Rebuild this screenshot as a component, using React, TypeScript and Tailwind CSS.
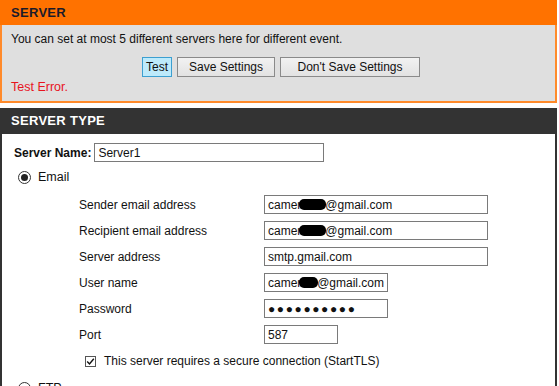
import React from "react";

function Redacted() {
  return <span className="inline-block w-[27px] h-[11px] bg-black rounded-[5px] align-[-1px] -ml-[2px] -mr-[1px]" />;
}

function FakeInput({ width, children }: { width: string; children: React.ReactNode }) {
  return (
    <div className={`${width} h-[19px] border border-[#7a7a7a] bg-white px-[3px] flex items-center text-[12px] text-[#111] leading-none whitespace-nowrap overflow-hidden`}>
      {children}
    </div>
  );
}

const rows: { label: string; width: string; value: React.ReactNode }[] = [
  { label: "Sender email address", width: "w-[224px]", value: <>camer<Redacted />@gmail.com</> },
  { label: "Recipient email address", width: "w-[224px]", value: <>camer<Redacted />@gmail.com</> },
  { label: "Server address", width: "w-[224px]", value: "smtp.gmail.com" },
  { label: "User name", width: "w-[124px]", value: <>camer<Redacted />@gmail.com</> },
  { label: "Password", width: "w-[124px]", value: <span className="tracking-[1.6px] text-[12px]">●●●●●●●●●●</span> },
  { label: "Port", width: "w-[74px]", value: "587" },
];

export default function App() {
  return (
    <div className="w-[559px] h-[386px] overflow-hidden bg-white font-['Liberation_Sans','DejaVu_Sans',sans-serif] text-[12px] text-[#222]">
      <div className="w-[557px]">
        {/* SERVER panel */}
        <div className="h-[25px] bg-[#ff7200] pl-[11px] flex items-center text-[13px] font-bold tracking-[0.3px] text-[#1b1b2a]">
          SERVER
        </div>
        <div className="h-[78px] bg-[#dfdfdf] border-x-2 border-b-2 border-[#ff8a2a] pl-[9px] pt-[5px]">
          <div className="text-[12px] text-[#111]">You can set at most 5 different servers here for different event.</div>
          <div className="flex gap-[5px] pl-[131px] mt-[9px]">
            <button className="h-[20px] w-[30px] bg-[#bdeafb] border border-[#3c9fd0] text-[12px] text-[#111]">Test</button>
            <button className="h-[20px] w-[98px] bg-gradient-to-b from-[#f2f2f2] to-[#e2e2e2] border border-[#8a8a8a] text-[12px] text-[#111]">Save Settings</button>
            <button className="h-[20px] w-[140px] bg-gradient-to-b from-[#f2f2f2] to-[#e2e2e2] border border-[#8a8a8a] text-[12px] text-[#111]">Don't Save Settings</button>
          </div>
          <div className="text-[#e8141e] text-[12.5px] mt-[1px]">Test Error.</div>
        </div>

        {/* SERVER TYPE panel */}
        <div className="mt-[5px] h-[26px] bg-[#333333] pl-[11px] flex items-center text-[13px] font-bold tracking-[0.3px] text-white">
          SERVER TYPE
        </div>
        <div className="border-x-2 border-[#333333] h-[260px] pl-[12px]">
          <div className="flex items-center gap-[3px] pt-[9px]">
            <span className="font-bold text-[12px] text-[#111]">Server Name:</span>
            <FakeInput width="w-[230px]">Server1</FakeInput>
          </div>
          <div className="flex items-center gap-[7px] mt-[5px] pl-[4px] h-[20px]">
            <span className="w-[13px] h-[13px] rounded-full border border-[#333] flex items-center justify-center">
              <span className="w-[7px] h-[7px] rounded-full bg-[#222]" />
            </span>
            <span className="text-[12.5px] text-[#111]">Email</span>
          </div>
          <div className="mt-[8px] flex flex-col gap-[7px]">
            {rows.map((r) => (
              <div key={r.label} className="flex items-center h-[19px]">
                <span className="w-[250px] pl-[65px] text-[12px] text-[#111]">{r.label}</span>
                <FakeInput width={r.width}>{r.value}</FakeInput>
              </div>
            ))}
          </div>
          <div className="flex items-center gap-[8px] pl-[71px] mt-[8px]">
            <span className="w-[11px] h-[11px] border border-[#555] bg-white flex items-center justify-center">
              <svg width="9" height="9" viewBox="0 0 9 9">
                <path d="M1.2 4.6 L3.5 7 L7.8 1.8" fill="none" stroke="#111" strokeWidth="1.4" />
              </svg>
            </span>
            <span className="text-[12px] text-[#111]">This server requires a secure connection (StartTLS)</span>
          </div>
          <div className="flex items-center gap-[7px] mt-[8px] pl-[4px] h-[20px]">
            <span className="w-[13px] h-[13px] rounded-full border border-[#333]" />
            <span className="text-[12.5px] text-[#111]">FTP</span>
          </div>
        </div>
      </div>
    </div>
  );
}
